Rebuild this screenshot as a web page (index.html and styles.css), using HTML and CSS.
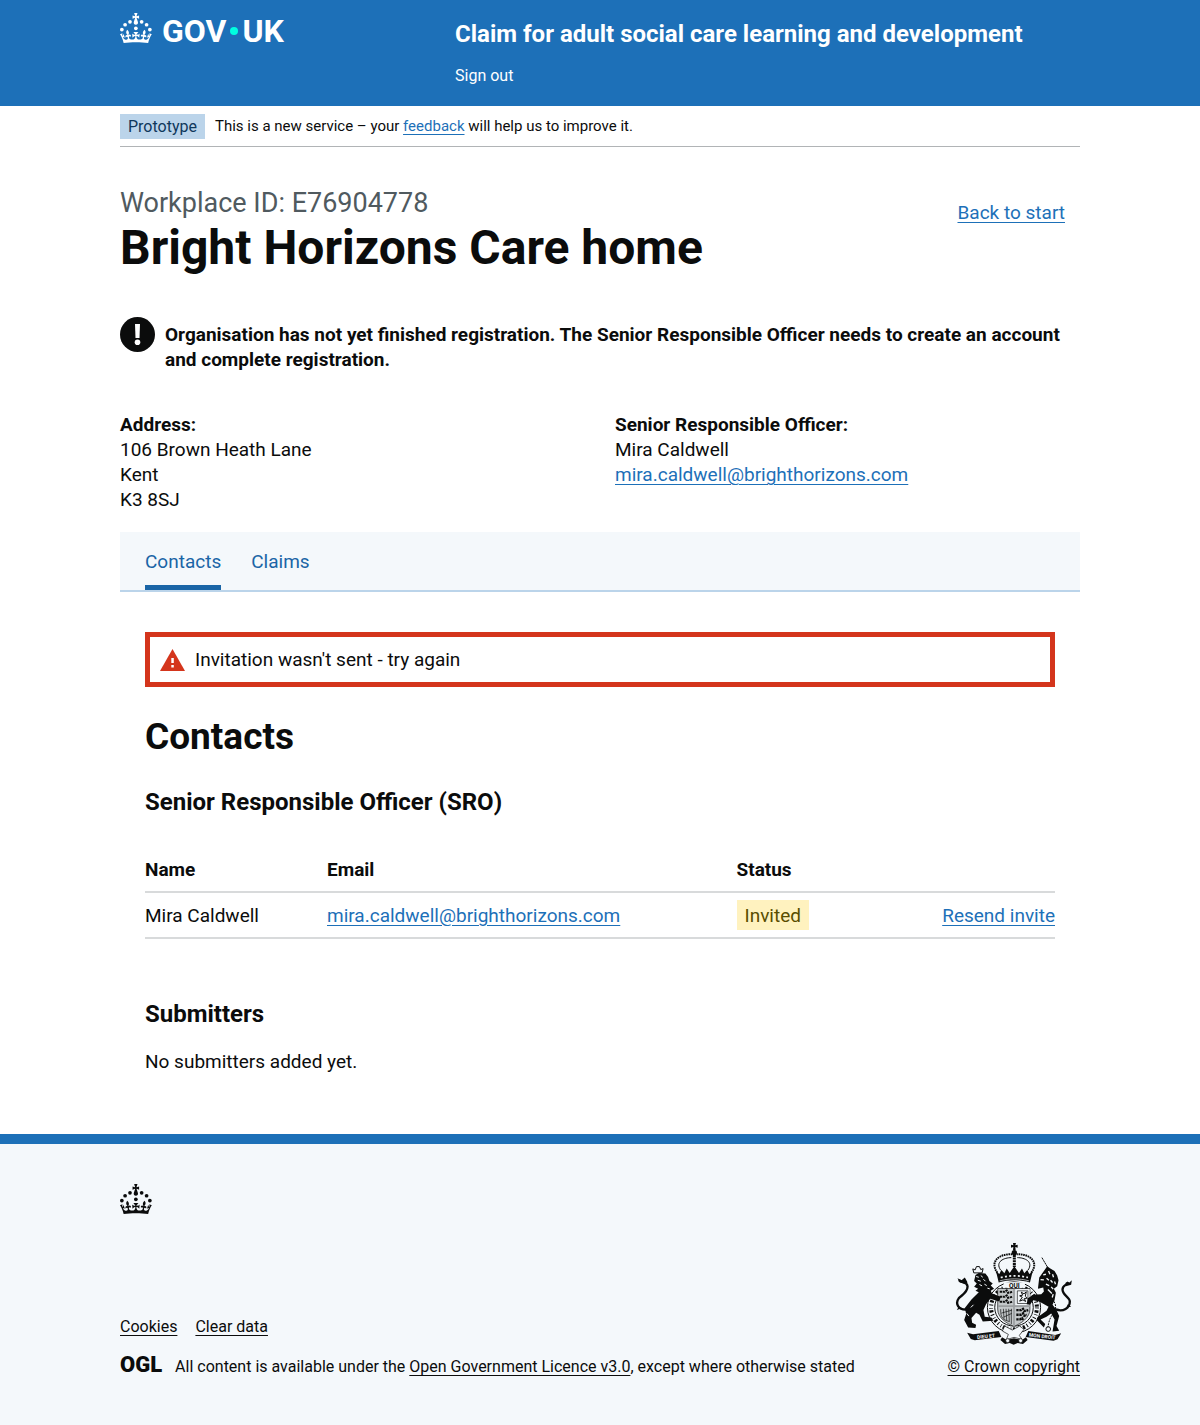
FILE: index.html
```html
<!DOCTYPE html>
<html lang="en">
<head>
<meta charset="utf-8">
<meta name="viewport" content="width=device-width, initial-scale=1">
<title>Bright Horizons Care home - Claim for adult social care learning and development</title>
<link rel="stylesheet" href="styles.css">
</head>
<body>
<svg class="sprite" aria-hidden="true">
  <symbol id="crown" viewBox="0 0 64 60">
    <circle cx="20" cy="17.6" r="3.7"/>
    <circle cx="10.2" cy="23.5" r="3.7"/>
    <circle cx="3.7" cy="33.2" r="3.7"/>
    <circle cx="31.7" cy="30.6" r="3.7"/>
    <circle cx="43.3" cy="17.6" r="3.7"/>
    <circle cx="53.2" cy="23.5" r="3.7"/>
    <circle cx="59.7" cy="33.2" r="3.7"/>
    <path d="M33.1,9.8c.2-.1.3-.3.5-.5l4.6,2.4v-6.8l-4.6,1.5c-.1-.2-.3-.3-.5-.5l1.9-5.9h-6.7l1.9,5.9c-.2.1-.3.3-.5.5l-4.6-1.5v6.8l4.6-2.4c.1.2.3.3.5.5l-2.6,8c-.9,2.8,1.2,5.7,4.1,5.7h0c3,0,5.1-2.9,4.1-5.7l-2.6-8ZM37,37.9s-3.4,3.8-4.1,6.1c2.2,0,4.2-.5,6.4-2.8l-.7,8.5c-2-2.8-4.4-4.1-5.7-3.8.1,3.1.5,6.7,5.8,7.2,3.7.3,6.7-1.5,7-3.8.4-2.6-2-4.3-3.7-1.6-1.4-4.5,2.4-6.1,4.9-3.2-1.9-4.5-1.8-7.7,2.4-10.9,3,4,2.6,7.3-1.2,11.1,2.4-1.3,6.2,0,4,4.6-1.2-2.8-3.7-2.2-4.2.2-.3,1.7.7,3.7,3,4.2,1.9.3,4.7-.9,7-5.9-1.3,0-2.4.7-3.9,1.7l2.4-8c.6,2.3,1.4,3.7,2.2,4.5.6-1.6.5-2.8,0-5.3l5,1.8c-2.6,3.6-5.2,8.7-7.3,17.5-7.4-1.1-15.7-1.7-24.5-1.7h0c-8.8,0-17.1.6-24.5,1.7-2.1-8.9-4.7-13.9-7.3-17.5l5-1.8c-.5,2.5-.6,3.7,0,5.3.8-.8,1.6-2.3,2.2-4.5l2.4,8c-1.5-1-2.6-1.7-3.9-1.7,2.3,5,5.2,6.2,7,5.9,2.3-.4,3.3-2.4,3-4.2-.5-2.4-3-3.1-4.2-.2-2.2-4.6,1.6-6,4-4.6-3.7-3.7-4.2-7.1-1.2-11.1,4.2,3.2,4.3,6.4,2.4,10.9,2.5-2.8,6.3-1.3,4.9,3.2-1.8-2.7-4.1-1-3.7,1.6.3,2.3,3.3,4.1,7,3.8,5.4-.5,5.7-4.2,5.8-7.2-1.3-.2-3.7,1-5.7,3.8l-.7-8.5c2.2,2.3,4.2,2.7,6.4,2.8-.7-2.3-4.1-6.1-4.1-6.1h10.6,0Z"/>
  </symbol>
</svg>

<header class="header">
  <div class="container header-grid">
    <a class="logo" href="#">
      <svg class="crown"><use href="#crown"/></svg>
      <span class="logo-text">GOV<span class="logo-dot"></span>UK</span>
    </a>
    <div class="header-content">
      <a class="service-name" href="#">Claim for adult social care learning and development</a>
      <nav><a class="sign-out" href="#">Sign out</a></nav>
    </div>
  </div>
</header>

<div class="page">
  <div class="container">
    <div class="phase-banner">
      <strong class="tag tag-blue">Prototype</strong>
      <span class="phase-text">This is a new service – your <a class="link" href="#">feedback</a> will help us to improve it.</span>
    </div>

    <main class="main">
      <div class="title-row">
        <h1><span class="caption">Workplace ID: E76904778</span>Bright Horizons Care home</h1>
        <a class="link back-link" href="#">Back to start</a>
      </div>

      <div class="warning">
        <svg class="warning-icon" viewBox="0 0 35 35" aria-hidden="true">
          <circle cx="17.5" cy="17.5" r="17.5" fill="#0b0c0c"/>
          <path d="M15 7h5l-.5 14h-4z" fill="#fff"/>
          <circle cx="17.5" cy="25.3" r="2.8" fill="#fff"/>
        </svg>
        <strong>Organisation has not yet finished registration. The Senior Responsible Officer needs to create an account and complete registration.</strong>
      </div>

      <div class="details">
        <p><strong>Address:</strong><br>106 Brown Heath Lane<br>Kent<br>K3 8SJ</p>
        <p><strong>Senior Responsible Officer:</strong><br>Mira Caldwell<br><a class="link" href="#">mira.caldwell@brighthorizons.com</a></p>
      </div>

      <nav class="tabs">
        <a class="tab tab-current" href="#" aria-current="page">Contacts</a>
        <a class="tab" href="#">Claims</a>
      </nav>

      <div class="panel">
        <div class="alert" role="alert">
          <svg class="alert-icon" viewBox="0 0 25 22" aria-hidden="true">
            <path d="M12.5 0L25 22H0z" fill="#d4351c"/>
            <path d="M11.3 9h2.500v5h-2.500zM11.3 16h2.500v2.500h-2.500z" fill="#fff"/>
          </svg>
          <span>Invitation wasn't sent - try again</span>
        </div>

        <h2>Contacts</h2>
        <h3>Senior Responsible Officer (SRO)</h3>
        <table class="table">
          <thead>
            <tr><th class="col-name" scope="col">Name</th><th class="col-email" scope="col">Email</th><th scope="col">Status</th><td></td></tr>
          </thead>
          <tbody>
            <tr>
              <td>Mira Caldwell</td>
              <td><a class="link" href="#">mira.caldwell@brighthorizons.com</a></td>
              <td><strong class="tag tag-yellow">Invited</strong></td>
              <td class="action"><a class="link" href="#">Resend invite</a></td>
            </tr>
          </tbody>
        </table>

        <h3>Submitters</h3>
        <p>No submitters added yet.</p>
      </div>
    </main>
  </div>
</div>

<footer class="footer">
  <div class="container">
    <svg class="crown" aria-hidden="true"><use href="#crown"/></svg>
    <div class="footer-row">
      <div>
        <ul class="footer-links">
          <li><a href="#">Cookies</a></li>
          <li><a href="#">Clear data</a></li>
        </ul>
        <div class="licence">
          <span class="ogl">OGL</span>
          <span>All content is available under the <a href="#">Open Government Licence v3.0</a>, except where otherwise stated</span>
        </div>
      </div>
      <div class="copyright">
        <svg class="arms" viewBox="49 38 351 307" aria-hidden="true">
          <!-- crown -->
          <g fill="#0b0c0c">
            <path d="M223 38h9l-2 7 7-2v9l-7-2 1 10h-8l1-10-7 2v-9l7 2z"/>
            <circle cx="227" cy="67" r="8"/>
            <path d="M172 124l10 7 6-12 9 10 7-14 9 13 14-20 14 20 9-13 7 14 9-10 6 12 10-7-8 33c-30-9-64-9-94 0z"/>
          </g>
          <g fill="none" stroke="#0b0c0c">
            <path d="M176 128C150 90 186 70 220 72M278 128C304 90 268 70 234 72" stroke-width="6" stroke-dasharray="5 2"/>
            <path d="M186 120C168 94 196 82 218 82M268 120C286 94 258 82 236 82" stroke-width="3"/>
            <path d="M227 74v36" stroke-width="9" stroke-dasharray="6 2"/>
          </g>
          <path d="M186 142c27-7 55-7 82 0" fill="none" stroke="#f4f8fb" stroke-width="5" stroke-dasharray="6 7"/>
          <path d="M183 152c29-8 59-8 88 0" fill="none" stroke="#f4f8fb" stroke-width="2"/>

          <!-- garter -->
          <ellipse cx="226" cy="232" rx="80" ry="77" fill="#f4f8fb" stroke="#0b0c0c" stroke-width="3"/>
          <ellipse cx="226" cy="232" rx="69" ry="66" fill="none" stroke="#0b0c0c" stroke-width="12" stroke-dasharray="3 6 7 5 2 8"/>
          <ellipse cx="226" cy="232" rx="58" ry="56" fill="#f4f8fb" stroke="#0b0c0c" stroke-width="3"/>
          <path d="M195 156h64v17h-64z" fill="#f4f8fb"/>
          <text class="arms-text" x="227" y="172" text-anchor="middle">QUI</text>

          <!-- shield -->
          <path d="M177 175h97v62c0 27-27 43-48 52-22-9-49-25-49-52z" fill="#c4c8ca" stroke="#0b0c0c" stroke-width="2"/>
          <path d="M230 177h43v48h-43z" fill="#f4f8fb"/>
          <path d="M226 175v114M178 228h96" fill="none" stroke="#9a9ea0" stroke-width="5"/>
          <g fill="none" stroke="#0b0c0c">
            <path d="M183 185h15l6-4 4 7 13-3M183 200h15l6-4 4 7 13-3M183 215h15l6-4 4 7 13-3" stroke-width="6" stroke-dasharray="7 2"/>
            <path d="M236 182h32v38h-32z" stroke-width="2"/>
            <path d="M243 213l8-12-8-4 9-2-4-9 8 5 7-6-3 13 6 6-9 1 4 9-8-5z" stroke-width="3"/>
            <path d="M186 237c-1 28 8 32 25 37M194 236l2 30M202 236l2 35M210 236l2 40M218 236v46M188 249l32-9M195 261l24-11" stroke-width="2"/>
            <path d="M233 240h14l6-4 4 7 12-3M233 254h14l6-4 4 7 8-3M233 268h11l6-4 4 7" stroke-width="7" stroke-dasharray="7 2"/>
          </g>

          <!-- lion -->
          <g fill="#0b0c0c">
            <path d="M110 134l10-6 20 2 8 10 4 12 10 8-6 6 10 10-10 6 4 8 26 10-4 14-28-8-12 16-8 18 4 20 20 2 6 10-32 2-10-20-10-6-14 16 2 14 12 6-2 10-22-2-12-22 6-18-4-18 20-26 22-22-10-4 8-6-12-6 8-10-8-8z"/>
            <path d="M86 156l-8-14-10 8-12-6 6 12 20 6z"/>
            <path d="M60 230l-6 10 16-6z"/>
          </g>
          <path d="M84 238C58 240 48 220 60 204C70 194 88 186 86 168C84 154 72 160 60 150" fill="none" stroke="#0b0c0c" stroke-width="7"/>
          <path d="M105 128l-3-12 7 3 4-10h9l4 9 7-3-3 13z" fill="#f4f8fb" stroke="#0b0c0c" stroke-width="3"/>
          <path d="M112 139l8 2M126 136l6 5M117 150l9 3M134 147l6 6M122 163l8 4M137 162l7 4M146 174l7 2M96 232l8-8M84 250l6 8" fill="none" stroke="#f4f8fb" stroke-width="3"/>

          <!-- unicorn -->
          <path d="M310 82l17 29" fill="none" stroke="#0b0c0c" stroke-width="3" stroke-dasharray="5 1"/>
          <g fill="#0b0c0c">
            <path d="M302 142l14-20 10-14 8 6 14 8 8 14 4 14-4 18-10 8 6 12-4 22-6 14 12 16 8 18-8 30 8 14-20 2 6-36-10-18-14 10-18 8 14 14-4 10-22-22 2-8 28-20 6-12-28-16-18-4-10 14-10-2 4-18 16-10 24-2 8-8-2-12-16 4z"/>
            <path d="M382 156l10 2 8-8-2 14-16 4z"/>
            <path d="M388 222l10 8-14 2z"/>
          </g>
          <path d="M352 238C374 246 394 234 394 214C394 200 372 196 372 178C372 164 384 166 390 156" fill="none" stroke="#0b0c0c" stroke-width="7"/>
          <path d="M314 134l8-2M330 122l4 10M342 132l3 9M324 144l7 6M336 150l6 7M348 154l3 8M322 162l10 4M338 170l6 7M328 178l12 12M344 192l-3 10M306 148l10 1" fill="none" stroke="#f4f8fb" stroke-width="4"/>
          <path d="M334 200c22 18 22 40 6 56-8 12-10 24-12 36" fill="none" stroke="#0b0c0c" stroke-width="3" stroke-dasharray="6 3"/>
          <circle cx="329" cy="297" r="7" fill="none" stroke="#0b0c0c" stroke-width="3"/>

          <!-- ribbon and compartment -->
          <path d="M85 308l18 5 77-10 8 18-80 10-12-4z" fill="#0b0c0c"/>
          <path d="M368 310l-18 5-81-12-8 18 84 11 12-4z" fill="#0b0c0c"/>
          <path d="M198 288l23 12 22-12 13 10-14 18 8 12-24-6-23 7 6-16-18-10z" fill="#f4f8fb" stroke="#0b0c0c" stroke-width="2"/>
          <path d="M190 322l14 8 22-5 24 5 12-8 5 8-14 12-16-3-12 5-12-5-14 3-14-12z" fill="#0b0c0c"/>
          <circle cx="207" cy="332" r="6" fill="#f4f8fb" stroke="#0b0c0c" stroke-width="2"/>
          <circle cx="246" cy="332" r="6" fill="#f4f8fb" stroke="#0b0c0c" stroke-width="2"/>
          <text class="arms-text arms-motto" x="142" y="324" text-anchor="middle" transform="rotate(-6 142 318)">DIEU ET</text>
          <text class="arms-text arms-motto" x="311" y="324" text-anchor="middle" transform="rotate(6 311 318)">MON DROIT</text>
        </svg>
        <a href="#">© Crown copyright</a>
      </div>
    </div>
  </div>
</footer>
</body>
</html>
```
FILE: styles.css
```css
* { box-sizing: border-box; }

body {
  margin: 0;
  background: #f4f8fb;
  color: #0b0c0c;
  font-family: Roboto, "Liberation Sans", sans-serif;
  font-size: 19px;
  line-height: 25px;
}

h1, h2, h3, p, ul { margin: 0; }

.sprite { position: absolute; width: 0; height: 0; }

.page { background: #fff; }
.container { max-width: 1020px; margin: 0 auto; padding: 0 30px; }

.crown { display: block; width: 32px; height: 30px; fill: currentColor; }

.link { color: #1d70b8; text-decoration-thickness: 1px; text-underline-offset: 3px; }

/* Header */
.header { background: #1d70b8; color: #fff; }
.header a { color: inherit; text-decoration: none; }
.header-grid { display: grid; grid-template-columns: 1fr 2fr; padding-top: 13px; padding-bottom: 18px; }
.logo { display: flex; gap: 10px; align-items: flex-start; }
.logo-text { display: flex; align-items: center; gap: 4px; font-size: 32px; font-weight: 700; line-height: 36px; }
.logo-dot { width: 8px; height: 8px; border-radius: 50%; background: #00ffe0; }
.header-content { padding: 6px 0 0 15px; }
.service-name { font-size: 24px; font-weight: 700; line-height: 30px; }
.sign-out { display: block; margin-top: 14px; font-size: 16px; }

/* Phase banner */
.phase-banner { display: flex; gap: 10px; align-items: center; padding: 8px 0 7px; border-bottom: 1px solid #b1b4b6; font-size: 16px; }
.phase-text { font-size: 15px; }
.tag { display: inline-block; padding: 0 8px; font-weight: 400; }
.tag-blue { background: #bbd4ea; color: #0f385c; }
.tag-yellow { padding: 3px 8px 2px; background: #fff2bf; color: #594d00; }

/* Main */
.main { padding: 40px 0 60px; }
.title-row { display: flex; justify-content: space-between; align-items: flex-start; }
.title-row h1 { font-size: 48px; line-height: 50px; }
.caption { display: block; margin-bottom: 3px; color: #505a5f; font-size: 27px; font-weight: 400; line-height: 33px; }
.back-link { margin: 13px 15px 0 0; }
.warning { display: flex; gap: 10px; margin-top: 44px; }
.warning-icon { flex: none; width: 35px; height: 35px; }
.warning strong { padding-top: 5px; }
.details { display: grid; grid-template-columns: 1fr 1fr; gap: 30px; margin-top: 40px; }

.tabs { display: flex; gap: 30px; margin-top: 20px; padding: 0 25px; border-bottom: 2px solid #bbd4ea; background: #f4f8fb; }
.tab { padding: 17px 0 11px; border-bottom: 5px solid transparent; color: #1a65a6; text-decoration: none; }
.tab-current { border-color: #1a65a6; }

.panel { padding: 40px 25px 0; }
.alert { display: flex; gap: 10px; align-items: center; padding: 10px; border: 5px solid #d4351c; }
.alert-icon { width: 25px; height: 22px; }
.panel h2 { margin: 30px 0; font-size: 37px; line-height: 40px; }
.panel h3 { margin-bottom: 20px; font-size: 24px; line-height: 30px; }

.table { width: 100%; margin-bottom: 60px; border-collapse: collapse; table-layout: fixed; }
.table th, .table td { padding: 7px 0; border-bottom: 2px solid #d8dadb; text-align: left; }
.table th { padding: 20px 0 9px; }
.col-name { width: 20%; }
.col-email { width: 45%; }
.table .action { text-align: right; }

/* Footer */
.footer { padding: 40px 0 46px; border-top: 10px solid #1d70b8; font-size: 16px; }
.footer a { color: inherit; text-decoration-thickness: 1px; text-underline-offset: 3px; }
.footer-row { display: flex; justify-content: space-between; align-items: flex-end; margin-top: 29px; }
.footer-links { display: flex; gap: 18px; margin-bottom: 15px; padding: 0; list-style: none; }
.licence { display: flex; gap: 13px; align-items: flex-start; }
.ogl { font-size: 22px; font-weight: 900; line-height: 22px; }
.copyright { display: flex; flex-direction: column; gap: 9px; align-items: center; }
.arms { display: block; width: 117px; height: 102px; }
.arms-text { fill: #0b0c0c; font-size: 20px; font-weight: 700; }
.arms-motto { fill: #f4f8fb; font-size: 15px; }
```
